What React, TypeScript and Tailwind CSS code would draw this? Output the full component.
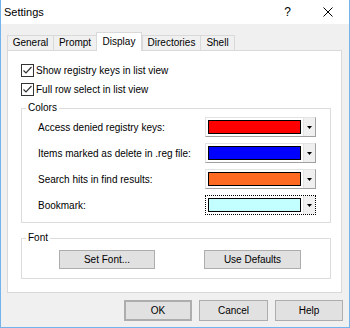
import clsx from "clsx";

const tabs = [
  { name: "General", w: "w-[46px]" },
  { name: "Prompt", w: "w-[43px]" },
  { name: "Display", w: "w-[46px]", active: true },
  { name: "Directories", w: "w-[58px]" },
  { name: "Shell", w: "w-[35px]", last: true },
];

const colorRows = [
  { label: "Access denied registry keys:", color: "bg-[#ff0000]" },
  { label: "Items marked as delete in .reg file:", color: "bg-[#0000ff]" },
  { label: "Search hits in find results:", color: "bg-[#ff6a22]" },
  { label: "Bookmark:", color: "bg-[#c4ffff]", focused: true },
];

const Checkbox = ({ label }: { label: string }) => (
  <div className="flex h-[13px] items-center gap-[2px]">
    <svg width="13" height="13" viewBox="0 0 13 13" className="shrink-0">
      <rect x="0.5" y="0.5" width="12" height="12" fill="#fff" stroke="#333" />
      <polyline
        points="2.5,6.5 5,9 10.5,3"
        fill="none"
        stroke="#333"
        strokeWidth="1.2"
      />
    </svg>
    <span>{label}</span>
  </div>
);

const ColorCombo = ({ color, focused }: { color: string; focused?: boolean }) => (
  <div
    className={clsx(
      "flex h-[20px] w-[111px] bg-white",
      focused
        ? "border border-dotted border-black"
        : "border border-t-[#e3e3e3] border-l-[#e3e3e3] border-r-[#a0a0a0] border-b-[#a0a0a0]"
    )}
  >
    <div className="flex-1 p-[2px]">
      <div className={clsx("h-full border border-black", color)} />
    </div>
    <div className="flex w-[12px] items-center justify-center border-l border-[#e3e3e3] bg-[#f0f0f0]">
      <svg width="5" height="3" viewBox="0 0 5 3">
        <polygon points="0,0 5,0 2.5,3" fill="#000" />
      </svg>
    </div>
  </div>
);

const Button = ({
  children,
  className,
}: {
  children: React.ReactNode;
  className?: string;
}) => (
  <button
    className={clsx(
      "flex items-center justify-center bg-[#e1e1e1] border border-[#adadad] text-black",
      className
    )}
  >
    {children}
  </button>
);

export default function App() {
  return (
    <div
      className="flex h-[328px] w-[350px] flex-col border-x border-b border-[#73b4ec] bg-[#f0f0f0] text-[10px] leading-[12px] text-black"
      style={{ fontFamily: '"Liberation Sans", Arial, sans-serif' }}
    >
      {/* title bar */}
      <div className="flex h-[24px] items-center bg-white pl-[3px] text-[11px]">
        <span>Settings</span>
        <div className="ml-auto flex items-center gap-[32px] pr-[16px]">
          <span className="text-[12px]">?</span>
          <svg width="10" height="10" viewBox="0 0 10 10">
            <path d="M0.5 0.5 L9.5 9.5 M9.5 0.5 L0.5 9.5" stroke="#000" strokeWidth="1" />
          </svg>
        </div>
      </div>

      <div className="flex flex-col px-[6px]">
        {/* tabs */}
        <div className="mt-[8px] flex h-[18px] items-end">
          {tabs.map((t) => (
            <div
              key={t.name}
              className={clsx(
                "flex items-center justify-center border-[#d9d9d9]",
                t.w,
                t.active
                  ? "relative z-10 -mb-px h-[19px] border border-b-0 bg-white"
                  : "h-[15px] border-t border-l",
                t.last && "border-r"
              )}
            >
              {t.name}
            </div>
          ))}
        </div>

        {/* panel */}
        <div className="flex h-[243px] w-[335px] flex-col border border-[#d9d9d9] bg-white pt-[13px] pl-[13px]">
          <div className="flex flex-col gap-[6px]">
            <Checkbox label="Show registry keys in list view" />
            <Checkbox label="Full row select in list view" />
          </div>

          <fieldset className="mt-[6px] w-[310px] border border-[#dcdcdc]">
            <legend className="ml-[4px] px-[2px] leading-[12px]">Colors</legend>
            <div className="flex flex-col gap-[6px] pt-[3px] pb-[7px] pl-[16px] pr-[14px]">
              {colorRows.map((r) => (
                <div key={r.label} className="flex h-[20px] items-center justify-between">
                  <span className="pt-[2px]">{r.label}</span>
                  <ColorCombo color={r.color} focused={r.focused} />
                </div>
              ))}
            </div>
          </fieldset>

          <fieldset className="mt-[9px] w-[310px] border border-[#dcdcdc]">
            <legend className="ml-[4px] px-[2px] leading-[12px]">Font</legend>
            <div className="flex gap-[49px] pt-[6px] pb-[9px] pl-[37px]">
              <Button className="h-[19px] w-[96px]">Set Font...</Button>
              <Button className="h-[19px] w-[97px]">Use Defaults</Button>
            </div>
          </fieldset>
        </div>

        {/* dialog buttons */}
        <div className="mt-[7px] flex justify-end gap-[7px]">
          <Button className="h-[21px] w-[68px] border-2 border-[#0078d7]">OK</Button>
          <Button className="h-[21px] w-[69px]">Cancel</Button>
          <Button className="h-[21px] w-[68px]">Help</Button>
        </div>
      </div>
    </div>
  );
}
